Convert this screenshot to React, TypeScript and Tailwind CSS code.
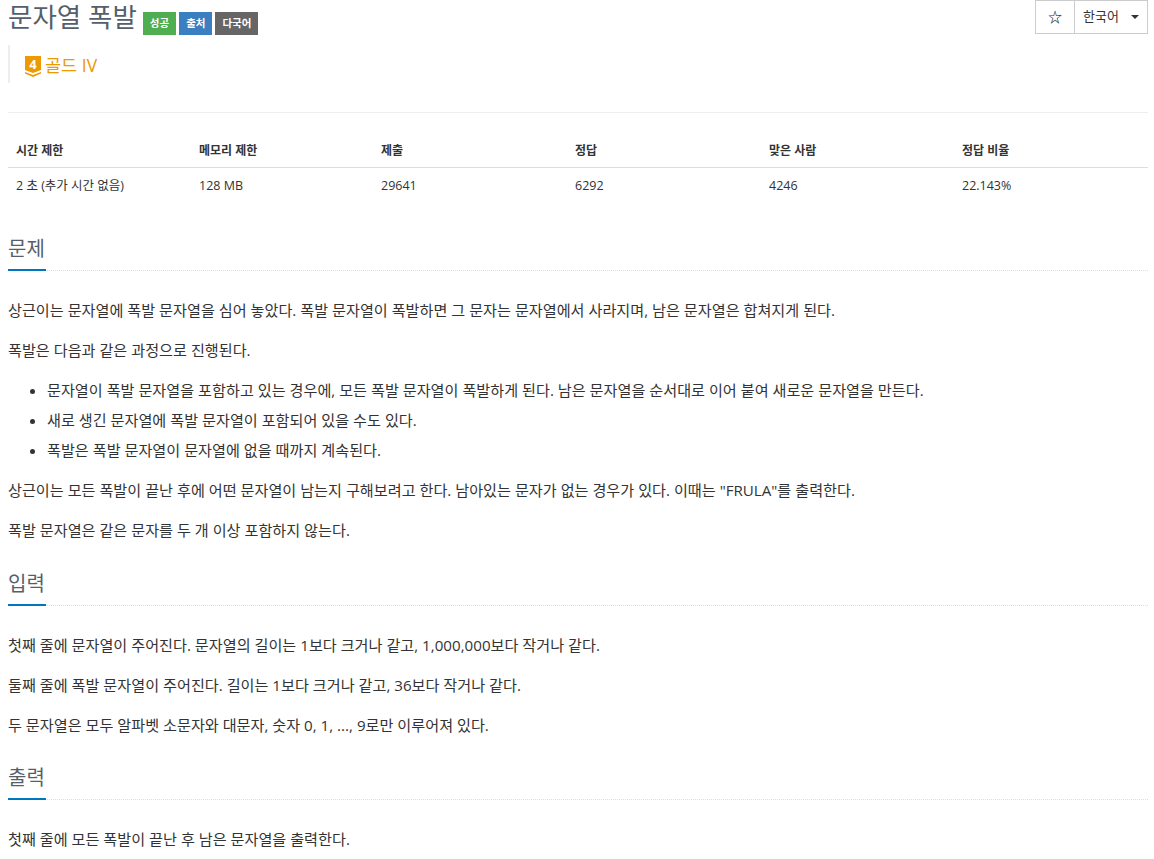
import React from 'react';

const font = "font-['Open_Sans','Noto_Sans_CJK_KR',sans-serif]";

const stats = [
    { label: '시간 제한', value: '2 초 (추가 시간 없음)', width: 'w-[183px]' },
    { label: '메모리 제한', value: '128 MB', width: 'w-[182px]' },
    { label: '제출', value: '29641', width: 'w-[194px]' },
    { label: '정답', value: '6292', width: 'w-[194px]' },
    { label: '맞은 사람', value: '4246', width: 'w-[193px]' },
    { label: '정답 비율', value: '22.143%', width: 'flex-1' },
];

const Badge: React.FC<{ color: string; children: React.ReactNode }> = ({ color, children }) => (
    <span className={`${color} flex h-[23px] items-center justify-center px-[7px] text-[10.5px] font-semibold leading-none text-white`}>{children}</span>
);

const SectionHeading: React.FC<{ title: string }> = ({ title }) => (
    <div className="border-b border-dotted border-[#dddddd]">
        <h2 className="-mb-px inline-block h-[38px] w-[38px] whitespace-nowrap border-b-2 border-[#0076c0] text-[20px] leading-[32px] text-[#555f6b]">{title}</h2>
    </div>
);

const App: React.FC = () => {
    return (
        <div className={`${font} h-[859px] w-[1154px] overflow-hidden bg-white pl-2 pr-[6px] text-[15.15px] text-[#333333]`}>
            {/* Title row */}
            <div className="flex h-[45px] items-start justify-between">
                <div className="flex items-start">
                    <h1 className="text-[26.5px] leading-[34px] text-[#555f6b]">문자열 폭발</h1>
                    <div className="ml-[6px] mt-3 flex gap-[3px]">
                        <Badge color="bg-[#4eae50]">성공</Badge>
                        <Badge color="bg-[#3b7fc0]">출처</Badge>
                        <Badge color="bg-[#666666]">다국어</Badge>
                    </div>
                </div>
                <div className="flex h-[34px] border border-[#cccccc] text-[13px] text-[#333333]">
                    <span className="flex w-[39px] items-center justify-center border-r border-[#cccccc] text-[14px] font-bold leading-none">☆</span>
                    <span className="flex w-[72px] items-center pl-2">
                        한국어
                        <span className="ml-3 h-0 w-0 border-x-4 border-t-4 border-x-transparent border-t-[#333333]"></span>
                    </span>
                </div>
            </div>

            {/* Tier */}
            <div className="flex h-[38px] items-center border-l-[2px] border-[#eeeeee] pl-[15px]">
                <svg viewBox="0 0 16 21" className="mt-1 h-[21px] w-4">
                    <path d="M0 0H16V14L8 17L0 14Z" fill="#ec9a00" />
                    <path d="M0 16L8 19L16 16V17.5L8 21L0 17.5Z" fill="#ec9a00" />
                    <text x="8" y="12.5" textAnchor="middle" fontSize="13" fontWeight="700" fill="#ffffff">4</text>
                </svg>
                <span className="ml-1 mt-[2px] text-[17.5px] text-[#ec9a00]">골드 IV</span>
            </div>

            <div className="mt-[29px] border-t border-[#eeeeee]"></div>

            {/* Stats table */}
            <div className="mt-5 text-[12.5px]">
                <div className="flex h-[35px] items-center border-b border-[#dddddd] pt-[2px] text-[12px] font-bold">
                    {stats.map((s) => (
                        <div key={s.label} className={`${s.width} pl-2`}>{s.label}</div>
                    ))}
                </div>
                <div className="flex h-[36px] items-center">
                    {stats.map((s) => (
                        <div key={s.label} className={`${s.width} pl-2`}>{s.value}</div>
                    ))}
                </div>
            </div>

            {/* 문제 */}
            <div className="mt-[29px]"><SectionHeading title="문제" /></div>
            <p className="mt-[29px] leading-5">상근이는 문자열에 폭발 문자열을 심어 놓았다. 폭발 문자열이 폭발하면 그 문자는 문자열에서 사라지며, 남은 문자열은 합쳐지게 된다.</p>
            <p className="mt-5 leading-5">폭발은 다음과 같은 과정으로 진행된다.</p>
            <ul className="mt-5 list-disc pl-[39px] leading-5 space-y-[10px]">
                <li>문자열이 폭발 문자열을 포함하고 있는 경우에, 모든 폭발 문자열이 폭발하게 된다. 남은 문자열을 순서대로 이어 붙여 새로운 문자열을 만든다.</li>
                <li>새로 생긴 문자열에 폭발 문자열이 포함되어 있을 수도 있다.</li>
                <li>폭발은 폭발 문자열이 문자열에 없을 때까지 계속된다.</li>
            </ul>
            <p className="mt-5 leading-5">상근이는 모든 폭발이 끝난 후에 어떤 문자열이 남는지 구해보려고 한다. 남아있는 문자가 없는 경우가 있다. 이때는 "FRULA"를 출력한다.</p>
            <p className="mt-5 leading-5">폭발 문자열은 같은 문자를 두 개 이상 포함하지 않는다.</p>

            {/* 입력 */}
            <div className="mt-[28px]"><SectionHeading title="입력" /></div>
            <p className="mt-[29px] leading-5">첫째 줄에 문자열이 주어진다. 문자열의 길이는 1보다 크거나 같고, 1,000,000보다 작거나 같다.</p>
            <p className="mt-5 leading-5">둘째 줄에 폭발 문자열이 주어진다. 길이는 1보다 크거나 같고, 36보다 작거나 같다.</p>
            <p className="mt-5 leading-5">두 문자열은 모두 알파벳 소문자와 대문자, 숫자 0, 1, ..., 9로만 이루어져 있다.</p>

            {/* 출력 */}
            <div className="mt-[27px]"><SectionHeading title="출력" /></div>
            <p className="mt-[29px] leading-5">첫째 줄에 모든 폭발이 끝난 후 남은 문자열을 출력한다.</p>
        </div>
    );
};

export default App;
